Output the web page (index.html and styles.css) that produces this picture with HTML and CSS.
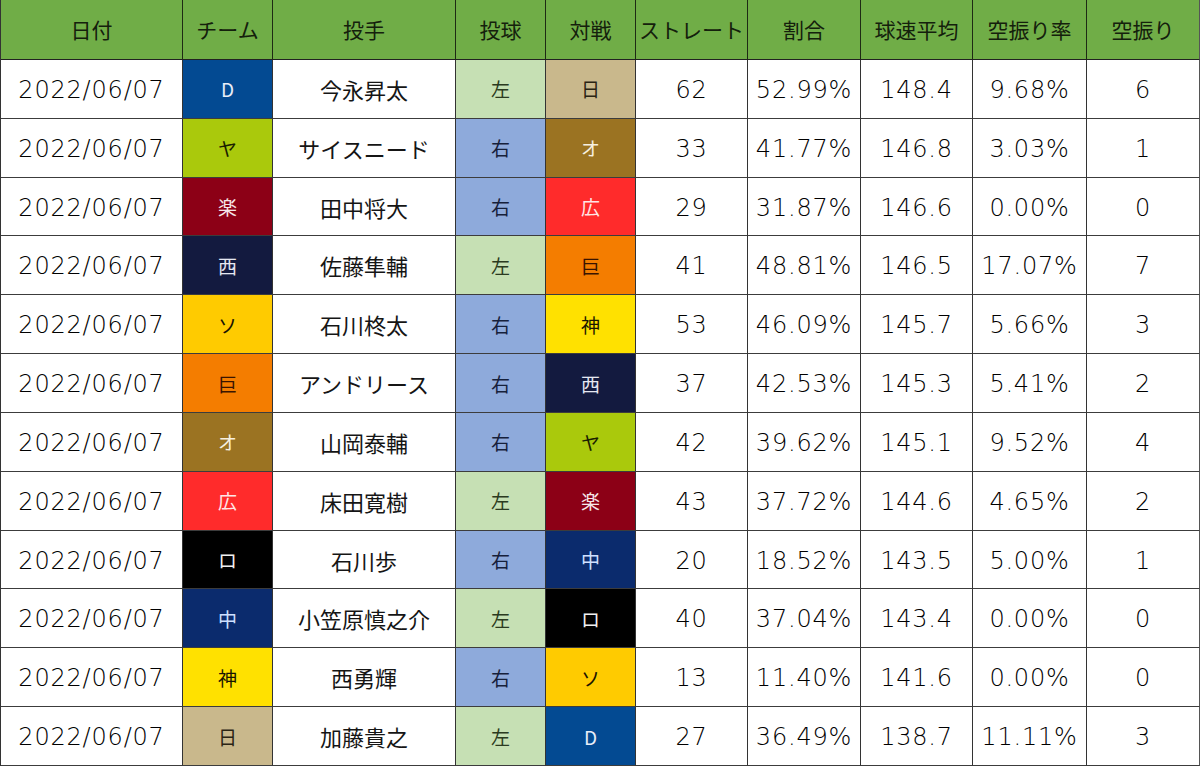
FILE: index.html
```html
<!DOCTYPE html>
<html lang="ja">
<head>
<meta charset="utf-8">
<link rel="stylesheet" href="styles.css">
</head>
<body>
<div class="sheet">
  <div class="row head">
    <div class="c">日付</div><div class="c">チーム</div><div class="c">投手</div><div class="c">投球</div><div class="c">対戦</div><div class="c">ストレート</div><div class="c">割合</div><div class="c">球速平均</div><div class="c">空振り率</div><div class="c">空振り</div>
  </div>
  <div class="row"><div class="c n">2022/06/07</div><div class="c t d">D</div><div class="c j">今永昇太</div><div class="c h l">左</div><div class="c t f">日</div><div class="c n">62</div><div class="c n">52.99%</div><div class="c n">148.4</div><div class="c n">9.68%</div><div class="c n">6</div></div>
  <div class="row"><div class="c n">2022/06/07</div><div class="c t s">ヤ</div><div class="c j">サイスニード</div><div class="c h r">右</div><div class="c t b">オ</div><div class="c n">33</div><div class="c n">41.77%</div><div class="c n">146.8</div><div class="c n">3.03%</div><div class="c n">1</div></div>
  <div class="row"><div class="c n">2022/06/07</div><div class="c t e">楽</div><div class="c j">田中将大</div><div class="c h r">右</div><div class="c t c2">広</div><div class="c n">29</div><div class="c n">31.87%</div><div class="c n">146.6</div><div class="c n">0.00%</div><div class="c n">0</div></div>
  <div class="row"><div class="c n">2022/06/07</div><div class="c t l2">西</div><div class="c j">佐藤隼輔</div><div class="c h l">左</div><div class="c t g">巨</div><div class="c n">41</div><div class="c n">48.81%</div><div class="c n">146.5</div><div class="c n">17.07%</div><div class="c n">7</div></div>
  <div class="row"><div class="c n">2022/06/07</div><div class="c t h2">ソ</div><div class="c j">石川柊太</div><div class="c h r">右</div><div class="c t tg">神</div><div class="c n">53</div><div class="c n">46.09%</div><div class="c n">145.7</div><div class="c n">5.66%</div><div class="c n">3</div></div>
  <div class="row"><div class="c n">2022/06/07</div><div class="c t g">巨</div><div class="c j">アンドリース</div><div class="c h r">右</div><div class="c t l2">西</div><div class="c n">37</div><div class="c n">42.53%</div><div class="c n">145.3</div><div class="c n">5.41%</div><div class="c n">2</div></div>
  <div class="row"><div class="c n">2022/06/07</div><div class="c t b">オ</div><div class="c j">山岡泰輔</div><div class="c h r">右</div><div class="c t s">ヤ</div><div class="c n">42</div><div class="c n">39.62%</div><div class="c n">145.1</div><div class="c n">9.52%</div><div class="c n">4</div></div>
  <div class="row"><div class="c n">2022/06/07</div><div class="c t c2">広</div><div class="c j">床田寛樹</div><div class="c h l">左</div><div class="c t e">楽</div><div class="c n">43</div><div class="c n">37.72%</div><div class="c n">144.6</div><div class="c n">4.65%</div><div class="c n">2</div></div>
  <div class="row"><div class="c n">2022/06/07</div><div class="c t m">ロ</div><div class="c j">石川歩</div><div class="c h r">右</div><div class="c t cd">中</div><div class="c n">20</div><div class="c n">18.52%</div><div class="c n">143.5</div><div class="c n">5.00%</div><div class="c n">1</div></div>
  <div class="row"><div class="c n">2022/06/07</div><div class="c t cd">中</div><div class="c j">小笠原慎之介</div><div class="c h l">左</div><div class="c t m">ロ</div><div class="c n">40</div><div class="c n">37.04%</div><div class="c n">143.4</div><div class="c n">0.00%</div><div class="c n">0</div></div>
  <div class="row"><div class="c n">2022/06/07</div><div class="c t tg">神</div><div class="c j">西勇輝</div><div class="c h r">右</div><div class="c t h2">ソ</div><div class="c n">13</div><div class="c n">11.40%</div><div class="c n">141.6</div><div class="c n">0.00%</div><div class="c n">0</div></div>
  <div class="row"><div class="c n">2022/06/07</div><div class="c t f">日</div><div class="c j">加藤貴之</div><div class="c h l">左</div><div class="c t d">D</div><div class="c n">27</div><div class="c n">36.49%</div><div class="c n">138.7</div><div class="c n">11.11%</div><div class="c n">3</div></div>
</div>
</body>
</html>
```
FILE: styles.css
```css
html, body {
  margin: 0;
  padding: 0;
  background: #ffffff;
}
.sheet {
  width: 1200px;
  height: 766px;
  display: grid;
  grid-template-rows: 60px repeat(12, 1fr);
  border-left: 1px solid #333;
  box-sizing: border-box;
  font-family: "Noto Sans CJK JP", sans-serif;
  color: #151515;
}
.row {
  display: grid;
  grid-template-columns: 182px 90px 183px 90px 90px 112px 113px 112px 114px 113px;
}
.c {
  box-sizing: border-box;
  border-right: 1px solid #333;
  border-bottom: 1px solid #3c3c3c;
  display: flex;
  align-items: center;
  justify-content: center;
  white-space: nowrap;
  overflow: hidden;
  font-size: 22px;
  line-height: 1;
}
.head .c {
  background: #70ad47;
  font-size: 21px;
  color: #14200c;
  border-right-color: #1e2a14;
  border-bottom-color: #222;
}
.head .c:last-child {
  border-right: none;
}
.row .c:last-child {
  border-right: 1px solid #555;
}
.n {
  font-family: "DejaVu Sans", sans-serif;
  font-weight: 200;
  font-size: 24px;
  letter-spacing: 0.8px;
  color: #000000;
  padding-top: 2px;
}
.j {
  font-size: 22px;
}
.t, .h {
  font-size: 19px;
}
.l { background: #c6e0b4; color: #2a3a20; }
.r { background: #8eaadb; color: #16203a; }

.d  { background: #034a92; color: #e8eef8; }
.s  { background: #aac90c; color: #1a2000; }
.e  { background: #8c0016; color: #f6e6e8; }
.l2 { background: #131a3f; color: #e6e8f2; }
.h2 { background: #ffcb00; color: #1a1400; }
.g  { background: #f47d00; color: #3a1400; }
.b  { background: #9b7322; color: #f6efe0; }
.c2 { background: #ff2b2b; color: #ffe6e6; }
.m  { background: #000000; color: #f0f0f0; }
.cd { background: #0b2b6d; color: #cfe0ff; }
.tg { background: #ffe100; color: #1a1600; }
.f  { background: #c9b88c; color: #2a2414; }
```
